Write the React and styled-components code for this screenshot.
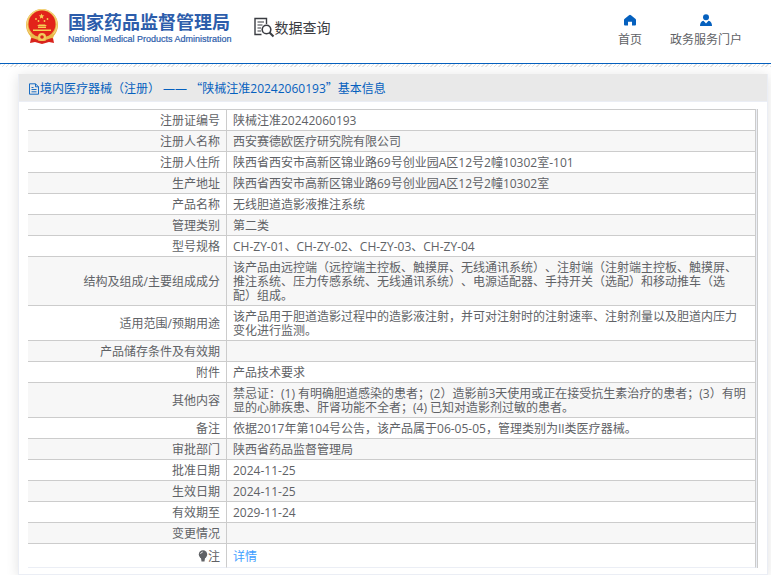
import React from 'react';
import styled, { createGlobalStyle } from 'styled-components';

const GlobalStyle = createGlobalStyle`
  body {
    margin: 0;
    background: #fff;
    color: #606266;
    font-family: "Open Sans", "Noto Sans CJK SC", sans-serif;
    font-size: 12px;
    line-height: 14px;
    text-spacing-trim: space-all;
  }
`;

const Header = styled.header`
  display: flex;
  justify-content: space-between;
  height: 63px;
  border-bottom: 1px solid #0560be;
`;

const Hatch = styled.div`
  height: 3px;
  background: repeating-linear-gradient(135deg, #e2e2e2 0 1px, #fff 1px 3px);
`;

const Brand = styled.div`
  display: flex;
  align-items: flex-start;
  padding: 8px 0 0 25px;
`;

const LogoLink = styled.a`
  display: flex;
  gap: 9px;
  text-decoration: none;
  color: #2d5dab;
`;

const LogoName = styled.div`
  padding-top: 4px;
  font-size: 18px;
  line-height: 20px;
  font-weight: 700;
`;

const LogoSub = styled.div`
  font-family: "Liberation Sans", Arial, sans-serif;
  font-size: 9px;
  line-height: 14px;
  -webkit-text-stroke: 0.2px #2d5dab;
`;

const SearchTitle = styled.div`
  display: flex;
  align-items: center;
  margin: 9px 0 0 22px;
  color: #3a3c42;
  font-size: 14px;
  line-height: 20px;
`;

const Nav = styled.nav`
  display: flex;
  align-items: flex-start;
  gap: 28px;
  padding: 14px 29px 0 0;
`;

const NavLink = styled.a`
  display: flex;
  flex-direction: column;
  align-items: center;
  gap: 7px;
  color: #606266;
  text-decoration: none;

  svg {
    color: #0560be;
  }
`;

const Card = styled.main`
  margin: 7px 3px 0 18px;
  border: 1px solid #ebeef5;
  border-top: 0;
  box-shadow: 0 2px 12px rgba(0, 0, 0, 0.12);
`;

const CardTitle = styled.h1`
  display: flex;
  align-items: center;
  box-sizing: border-box;
  height: 28px;
  margin: 0;
  padding: 2px 9px 0;
  border-bottom: 1px solid #ebeef5;
  background: #e9e9e9;
  color: #0560be;
  font-size: 12px;
  font-weight: 400;
`;

const Quote = styled.span`
  font-family: "Noto Sans CJK SC", sans-serif;
`;

const TableWrap = styled.div`
  margin: 7px 9px 6px;
  padding-right: 1px;
  border-right: 1px solid #ccc;
  background: #ebeef5;
`;

const Table = styled.table`
  width: 100%;
  border-collapse: separate;
  border-spacing: 0;
  border-top: 1px solid #ccc;
  background: #fff;
`;

const Row = styled.tr`
  background: ${(props) => (props.$striped ? '#f7f7f7' : '#fff')};
`;

const Label = styled.th`
  box-sizing: border-box;
  width: 199px;
  padding: 4px 6px 2px;
  border-right: 1px solid #ccc;
  border-bottom: 1px solid ${(props) => (props.$last ? '#ebeef5' : '#ccc')};
  font-weight: 400;
  text-align: right;
`;

const Value = styled.td`
  padding: ${(props) => (props.$last ? '6px 7px 3px 6px' : '4px 7px 2px 6px')};
  border-right: 1px solid #ccc;
  border-bottom: 1px solid ${(props) => (props.$last ? '#ebeef5' : '#ccc')};
`;

const DetailLink = styled.a`
  color: #409eff;
  text-decoration: none;
`;

const Bulb = styled.svg`
  vertical-align: -1px;
`;

function Emblem() {
  return (
    <svg width="34" height="37" viewBox="0 0 34 37" aria-hidden="true">
      <path d="M7 25 L27 25 L29 35 L24 34 L17 36 L10 34 L5 35 Z" fill="#d9231c" />
      <circle cx="17" cy="17" r="16" fill="#e9b84a" />
      <circle cx="17" cy="16.5" r="15" fill="none" stroke="#f7d983" strokeWidth="1" />
      <circle cx="17" cy="16" r="13.5" fill="#e2231a" />
      <path d="M16.5 5.5l.8 1.8 2 .2-1.500 1.300.5 2-1.800-1.100-1.700 1.100.5-2-1.500-1.300 2-.2z" fill="#f6cf55" />
      <circle cx="11" cy="11" r=".9" fill="#f6cf55" />
      <circle cx="13.500" cy="13" r=".9" fill="#f6cf55" />
      <circle cx="19.500" cy="13" r=".9" fill="#f6cf55" />
      <circle cx="22.500" cy="11" r=".9" fill="#f6cf55" />
      <path d="M12 18l2-1.500h6l2 1.500zM13 18.500h8v1.500H13zM8 21.500h18v1.500H8z" fill="#f6cf55" />
      <path d="M4 25q6 4 13 4t13-4l-2 5q-5 3-11 3T6 30z" fill="#e9b84a" />
      <circle cx="17" cy="29" r="4" fill="#f3cc5c" />
      <circle cx="17" cy="29" r="1.800" fill="#d9231c" />
      <path d="M7 31l6 2M27 31l-6 2" stroke="#d9231c" strokeWidth="2" />
    </svg>
  );
}

function SearchIcon() {
  return (
    <svg width="21" height="21" viewBox="0 0 21 21" fill="none" stroke="#3a3c42" aria-hidden="true">
      <path d="M7.500 17.500H1V1.500h11.500V7" strokeWidth="1.400" />
      <path d="M3.500 5h6.500M3.500 8h5M3.500 11h3.500M3.500 14h3.500" strokeWidth="1.200" />
      <circle cx="12.500" cy="12.500" r="4.300" strokeWidth="1.600" />
      <path d="M15.500 15.500l4 4" strokeWidth="2.200" />
    </svg>
  );
}

function HomeIcon() {
  return (
    <svg width="12" height="12" viewBox="0 0 12 12" aria-hidden="true">
      <path d="M6 .8 Q6.400.8 7 1.300L11.300 4.700Q12 5.300 12 6V10.500Q12 11.500 11 11.500H8V7.800H4V11.500H1Q0 11.500 0 10.500V6Q0 5.300.7 4.700L5 1.300Q5.600.8 6 .8Z" fill="currentColor" />
    </svg>
  );
}

function UserIcon() {
  return (
    <svg width="12" height="12" viewBox="0 0 12 12" fill="currentColor" aria-hidden="true">
      <circle cx="6" cy="3.200" r="3" />
      <path d="M3.500 6.800L6 9.500 8.500 6.800Q12 7.500 12 12H0Q0 7.500 3.500 6.800Z" />
    </svg>
  );
}

function DocIcon() {
  return (
    <svg width="12" height="12" viewBox="0 0 12 12" fill="none" stroke="currentColor" strokeWidth="0.900" aria-hidden="true">
      <path d="M1.500.8H7.500L10.500 3.800V11.200H1.500ZM7.500.8V3.800H10.500M3.500 4.500H5.500M3.500 6.500H8.500M3.500 8.800H8.500" />
    </svg>
  );
}

const rows = [
  ['注册证编号', '陕械注准20242060193'],
  ['注册人名称', '西安赛德欧医疗研究院有限公司'],
  ['注册人住所', '陕西省西安市高新区锦业路69号创业园A区12号2幢10302室-101'],
  ['生产地址', '陕西省西安市高新区锦业路69号创业园A区12号2幢10302室'],
  ['产品名称', '无线胆道造影液推注系统'],
  ['管理类别', '第二类'],
  ['型号规格', 'CH-ZY-01、CH-ZY-02、CH-ZY-03、CH-ZY-04'],
  ['结构及组成/主要组成成分', '该产品由远控端（远控端主控板、触摸屏、无线通讯系统）、注射端（注射端主控板、触摸屏、推注系统、压力传感系统、无线通讯系统）、电源适配器、手持开关（选配）和移动推车（选配）组成。'],
  ['适用范围/预期用途', '该产品用于胆道造影过程中的造影液注射，并可对注射时的注射速率、注射剂量以及胆道内压力变化进行监测。'],
  ['产品储存条件及有效期', ''],
  ['附件', '产品技术要求'],
  ['其他内容', '禁忌证：(1) 有明确胆道感染的患者；(2）造影前3天使用或正在接受抗生素治疗的患者；(3）有明显的心肺疾患、肝肾功能不全者；(4) 已知对造影剂过敏的患者。'],
  ['备注', '依据2017年第104号公告，该产品属于06-05-05，管理类别为II类医疗器械。'],
  ['审批部门', '陕西省药品监督管理局'],
  ['批准日期', '2024-11-25'],
  ['生效日期', '2024-11-25'],
  ['有效期至', '2029-11-24'],
  ['变更情况', ''],
];

function App() {
  return (
    <>
      <GlobalStyle />
      <Header>
        <Brand>
          <LogoLink href="#home">
            <Emblem />
            <div>
              <LogoName>国家药品监督管理局</LogoName>
              <LogoSub>National Medical Products Administration</LogoSub>
            </div>
          </LogoLink>
          <SearchTitle>
            <SearchIcon />
            数据查询
          </SearchTitle>
        </Brand>
        <Nav>
          <NavLink href="#index">
            <HomeIcon />
            首页
          </NavLink>
          <NavLink href="#portal">
            <UserIcon />
            政务服务门户
          </NavLink>
        </Nav>
      </Header>
      <Hatch />
      <Card>
        <CardTitle>
          <DocIcon />
          <span>
            境内医疗器械（注册） —— <Quote>“</Quote>陕械注准20242060193<Quote>”</Quote>基本信息
          </span>
        </CardTitle>
        <TableWrap>
          <Table>
            <tbody>
              {rows.map(([label, value], index) => (
                <Row key={label} $striped={index % 2 === 1}>
                  <Label scope="row">{label}</Label>
                  <Value>{value}</Value>
                </Row>
              ))}
              <Row>
                <Label scope="row" $last>
                  <Bulb width="10" height="12" viewBox="0 0 10 12" aria-hidden="true">
                    <circle cx="5" cy="4.500" r="4.200" fill="#606266" />
                    <path d="M3 8h4l-.5 3.500h-3z" fill="#606266" />
                    <path d="M2.500 4Q3 2.200 4.800 2" fill="none" stroke="#fff" strokeWidth="0.800" />
                  </Bulb>
                  注
                </Label>
                <Value $last>
                  <DetailLink href="#detail">详情</DetailLink>
                </Value>
              </Row>
            </tbody>
          </Table>
        </TableWrap>
      </Card>
    </>
  );
}

export default App;
